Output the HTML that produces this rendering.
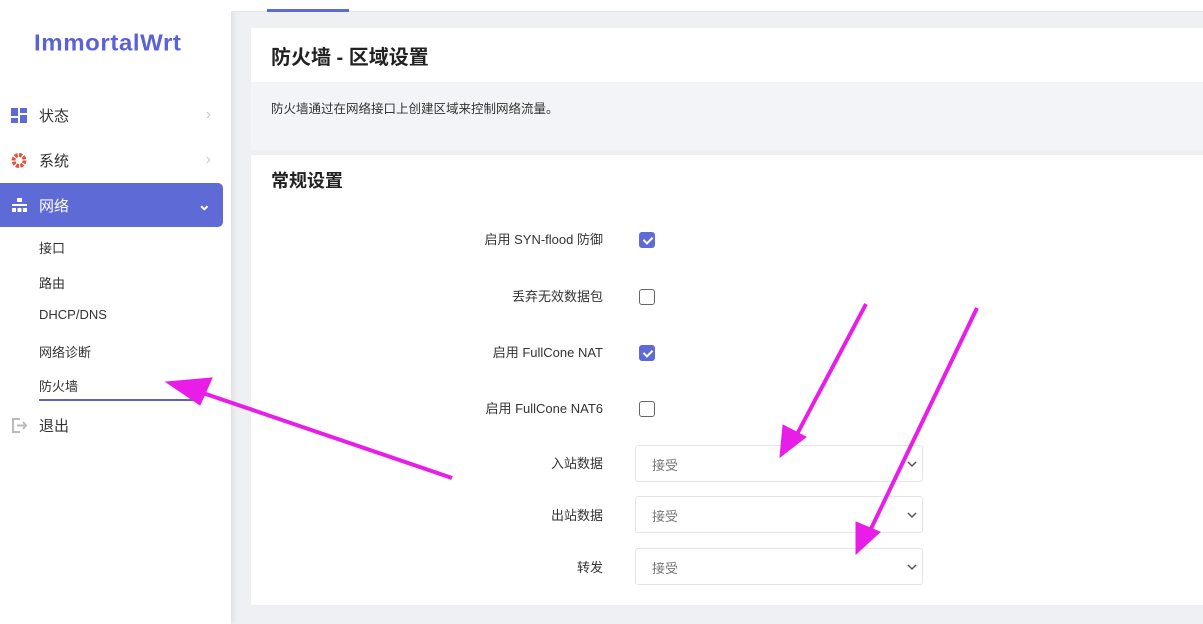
<!DOCTYPE html>
<html><head><meta charset="utf-8"><style>
*{box-sizing:border-box;margin:0;padding:0}
body{width:1203px;height:624px;overflow:hidden;background:#eef0f4;font-family:"Liberation Sans","Noto Sans CJK SC",sans-serif;position:relative;color:#333}
.side{position:absolute;left:0;top:0;width:231px;height:624px;background:#fff;box-shadow:2px 0 6px rgba(0,0,0,.08)}
.logo{position:absolute;left:34px;top:30px;font-size:24px;font-weight:bold;color:#5b62d6;letter-spacing:0.6px;transform:scaleY(0.95)}
.mi{position:absolute;left:0;width:223px;height:44px;font-size:15px;display:flex;align-items:center;padding-left:39px;color:#333}
.mi .ic{position:absolute;left:11px;top:14px;width:17px;height:17px}
.mi .ar{position:absolute;right:12px;color:#ccc;font-size:16px}
.act{background:#5e6ad6;color:#fff;border-radius:0 5px 5px 0}
.sub{position:absolute;left:39px;font-size:13px;color:#333}
.tabs{position:absolute;left:231px;top:0;right:0;height:12px;background:#fff;border-bottom:1px solid #e3e5ea}
.card{position:absolute;left:251px;right:0;background:#fff}
h2{font-size:20px;font-weight:bold;color:#222}
.row{position:absolute;right:600px;font-size:13px;color:#333;text-align:right}
.cb{position:absolute;left:639px;width:16px;height:16px;border:1px solid #666;border-radius:3px;background:#fff}
.cb.on{background:#5e6ad6;border-color:#5e6ad6}
.cb.on:after{content:"";position:absolute;left:5px;top:2px;width:4px;height:7px;border:solid #fff;border-width:0 2px 2px 0;transform:rotate(45deg)}
.sel{position:absolute;left:635px;width:288px;height:37px;border:1px solid #e3e5ea;border-radius:3px;background:#fff;font-size:13px;color:#777;padding:9px 16px}
.sel svg{position:absolute;right:5px;top:15px}
</style></head><body>
<div class="side">
<div class="logo">ImmortalWrt</div>
<div class="mi" style="top:93px"><svg class="ic" viewBox="0 0 17 17"><rect x="0" y="1" width="7" height="8" fill="#5e6ad6"/><rect x="9" y="1" width="7" height="5" fill="#5e6ad6"/><rect x="0" y="11" width="7" height="5" fill="#5e6ad6"/><rect x="9" y="8" width="7" height="8" fill="#5e6ad6"/></svg>状态<span class="ar">›</span></div>
<div class="mi" style="top:138px"><svg class="ic" viewBox="0 0 17 17"><circle cx="8" cy="8.5" r="5.5" fill="none" stroke="#e5533b" stroke-width="4" stroke-dasharray="3 1.3"/></svg>系统<span class="ar">›</span></div>
<div class="mi act" style="top:183px"><svg class="ic" viewBox="0 0 17 17" fill="#fff"><rect x="6" y="1" width="5" height="4"/><rect x="1" y="7" width="15" height="2"/><rect x="1" y="11" width="4" height="4"/><rect x="6.5" y="11" width="4" height="4"/><rect x="12" y="11" width="4" height="4"/></svg>网络<span class="ar" style="color:#fff;font-weight:bold">⌄</span></div>
<div class="sub" style="top:238px">接口</div>
<div class="sub" style="top:273px">路由</div>
<div class="sub" style="top:307px">DHCP/DNS</div>
<div class="sub" style="top:342px">网络诊断</div>
<div class="sub" style="top:376px">防火墙</div>
<div style="position:absolute;left:39px;top:399px;width:160px;height:2px;background:#5e62b8"></div>
<div class="mi" style="top:403px"><svg class="ic" viewBox="0 0 17 17"><path d="M9 2H2v13h7" fill="none" stroke="#bbb" stroke-width="2"/><path d="M6 8.5h9M12 5l3 3.5-3 3.5" fill="none" stroke="#bbb" stroke-width="2"/></svg>退出</div>
</div>
<div class="tabs"><div style="position:absolute;left:36px;top:9px;width:82px;height:3px;background:#5e6ad6"></div></div>
<div class="card" style="top:28px;height:54px;padding:13px 20px"><h2>防火墙 - 区域设置</h2></div>
<div style="position:absolute;left:251px;right:0;top:82px;height:68px;background:#f3f4f7"></div>
<div style="position:absolute;left:271px;top:98px;font-size:12.5px;color:#333">防火墙通过在网络接口上创建区域来控制网络流量。</div>
<div class="card" style="top:155px;height:450px;padding:12px 20px"><h2 style="font-size:18px">常规设置</h2></div>
<div class="row" style="top:229px">启用 SYN-flood 防御</div><div class="cb on" style="top:232px"></div>
<div class="row" style="top:286px">丢弃无效数据包</div><div class="cb" style="top:289px"></div>
<div class="row" style="top:342px">启用 FullCone NAT</div><div class="cb on" style="top:345px"></div>
<div class="row" style="top:398px">启用 FullCone NAT6</div><div class="cb" style="top:401px"></div>
<div class="row" style="top:453px">入站数据</div><div class="sel" style="top:445px">接受<svg width="10" height="7" viewBox="0 0 10 7"><path d="M1 1l4 4 4-4" fill="none" stroke="#555" stroke-width="1.5"/></svg></div>
<div class="row" style="top:505px">出站数据</div><div class="sel" style="top:496px">接受<svg width="10" height="7" viewBox="0 0 10 7"><path d="M1 1l4 4 4-4" fill="none" stroke="#555" stroke-width="1.5"/></svg></div>
<div class="row" style="top:557px">转发</div><div class="sel" style="top:548px">接受<svg width="10" height="7" viewBox="0 0 10 7"><path d="M1 1l4 4 4-4" fill="none" stroke="#555" stroke-width="1.5"/></svg></div>
<svg style="position:absolute;left:0;top:0" width="1203" height="624">
<g fill="#e81ee8" stroke="#e81ee8">
<path d="M452 478 L200 392" stroke-width="4"/><polygon points="166,382 212,378 200,405"/>
<path d="M866 304 L795 438" stroke-width="4"/><polygon points="780,457 783,425 806,437"/>
<path d="M977 308 L868 535" stroke-width="4"/><polygon points="856,554 856,522 880,532"/>
</g></svg>
</body></html>
